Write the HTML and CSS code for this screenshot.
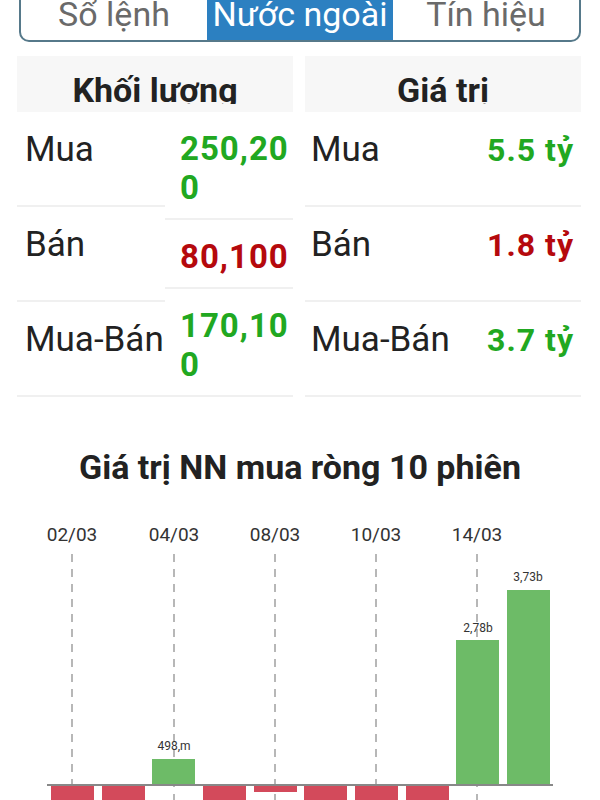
FILE: index.html
```html
<!DOCTYPE html>
<html lang="vi">
<head>
    <meta charset="UTF-8">
    <meta name="viewport" content="width=device-width, initial-scale=1.0">
    <title>Nước ngoài</title>
    <link rel="stylesheet" href="styles.css">
</head>
<body>
    <div class="tabs">
        <div class="tab">Sổ lệnh</div>
        <div class="tab active">Nước ngoài</div>
        <div class="tab">Tín hiệu</div>
    </div>

    <div class="stats">
        <div class="block">
            <div class="block-head"><span>Khối lượng</span></div>
            <div class="block-body">
                <div class="label-col">
                    <div class="label-cell">Mua</div>
                    <div class="label-cell">Bán</div>
                    <div class="label-cell">Mua-Bán</div>
                </div>
                <div class="value-col">
                    <div class="value-cell up">250,200</div>
                    <div class="value-cell down">80,100</div>
                    <div class="value-cell up">170,100</div>
                </div>
            </div>
        </div>

        <div class="block">
            <div class="block-head"><span>Giá trị</span></div>
            <div class="value-row">
                <span class="label">Mua</span>
                <span class="amount up">5.5 tỷ</span>
            </div>
            <div class="value-row">
                <span class="label">Bán</span>
                <span class="amount down">1.8 tỷ</span>
            </div>
            <div class="value-row">
                <span class="label">Mua-Bán</span>
                <span class="amount up">3.7 tỷ</span>
            </div>
        </div>
    </div>

    <h2 class="chart-title">Giá trị NN mua ròng 10 phiên</h2>

    <svg class="chart" width="600" height="330" viewBox="0 0 600 330">
        <g class="axis-labels">
            <text x="72" y="56">02/03</text>
            <text x="174" y="56">04/03</text>
            <text x="275" y="56">08/03</text>
            <text x="376" y="56">10/03</text>
            <text x="477" y="56">14/03</text>
        </g>
        <g class="grid">
            <line x1="72" y1="69" x2="72" y2="330"/>
            <line x1="174" y1="69" x2="174" y2="330"/>
            <line x1="275" y1="69" x2="275" y2="330"/>
            <line x1="376" y1="69" x2="376" y2="330"/>
            <line x1="477" y1="69" x2="477" y2="330"/>
        </g>
        <g class="bars-up">
            <rect x="152" y="274" width="43" height="26"/>
            <rect x="456" y="155" width="43" height="145"/>
            <rect x="507" y="105" width="43" height="195"/>
        </g>
        <g class="bars-down">
            <rect x="51" y="300" width="43" height="40"/>
            <rect x="102" y="300" width="43" height="40"/>
            <rect x="203" y="300" width="43" height="40"/>
            <rect x="254" y="300" width="43" height="7"/>
            <rect x="304" y="300" width="43" height="40"/>
            <rect x="355" y="300" width="43" height="40"/>
            <rect x="406" y="300" width="43" height="40"/>
        </g>
        <line class="axis" x1="47" y1="300" x2="553" y2="300"/>
        <g class="bar-labels">
            <text x="174" y="265">498,m</text>
            <text x="478" y="147">2,78b</text>
            <text x="528" y="96">3,73b</text>
        </g>
    </svg>
</body>
</html>
```

FILE: styles.css
```css
body {
    margin: 0;
    padding: 0;
    font-family: Roboto, "Noto Sans", sans-serif;
    background-color: #fff;
    color: #222;
    overflow: hidden;
}
.tabs {
    display: flex;
    height: 56px;
    margin: -14px 19px 0 19px;
    border: 2px solid #56798a;
    border-radius: 10px;
    overflow: hidden;
    box-sizing: border-box;
}
.tab {
    flex: 1;
    text-align: center;
    font-size: 34px;
    line-height: 52px;
    color: #6a6a6a;
    white-space: nowrap;
}
.tab.active {
    background-color: #2c80c1;
    color: #fff;
}
.stats {
    display: flex;
    gap: 12px;
    padding: 0 19px 0 17px;
    margin-top: 14px;
}
.block {
    flex: 1;
}
.block-head {
    height: 56px;
    padding-top: 14px;
    box-sizing: border-box;
    background-color: #f7f7f7;
    text-align: center;
}
.block-head span {
    display: block;
    height: 34px;
    overflow: hidden;
    font-size: 34px;
    line-height: 40px;
    font-weight: bold;
    color: #222;
}
.block-body {
    display: flex;
}
.label-col {
    width: 148px;
    display: flex;
    flex-direction: column;
}
.label-cell {
    flex: 1;
    padding: 18px 0 0 8px;
    font-size: 35px;
    line-height: 40px;
    border-bottom: 2px solid #f0f0f0;
}
.value-col {
    flex: 1;
}
.value-cell {
    padding: 17px 4px 11px 15px;
    font-size: 33px;
    line-height: 39px;
    font-weight: bold;
    letter-spacing: 1px;
    word-break: break-all;
    border-bottom: 2px solid #f0f0f0;
}
.value-row {
    display: flex;
    justify-content: space-between;
    align-items: baseline;
    height: 95px;
    box-sizing: border-box;
    padding: 18px 7px 0 6px;
    border-bottom: 2px solid #f0f0f0;
}
.label {
    font-size: 35px;
    line-height: 40px;
}
.amount {
    font-size: 32px;
    line-height: 40px;
    font-weight: bold;
    letter-spacing: 1px;
}
.up {
    color: #21a821;
}
.down {
    color: #b5090d;
}
.chart-title {
    margin: 52px 0 0 0;
    font-size: 34px;
    line-height: 36px;
    font-weight: bold;
    text-align: center;
    color: #222;
}
.chart {
    display: block;
}
.axis-labels text {
    font-size: 19px;
    fill: #333;
    text-anchor: middle;
}
.grid line {
    stroke: #a0a0a0;
    stroke-width: 1.5;
    stroke-dasharray: 8 7;
}
.bars-up rect {
    fill: #6dbb67;
}
.bars-down rect {
    fill: #d34a5b;
}
.axis {
    stroke: #888;
    stroke-width: 2;
}
.bar-labels text {
    font-size: 12px;
    fill: #333;
    text-anchor: middle;
}
```
